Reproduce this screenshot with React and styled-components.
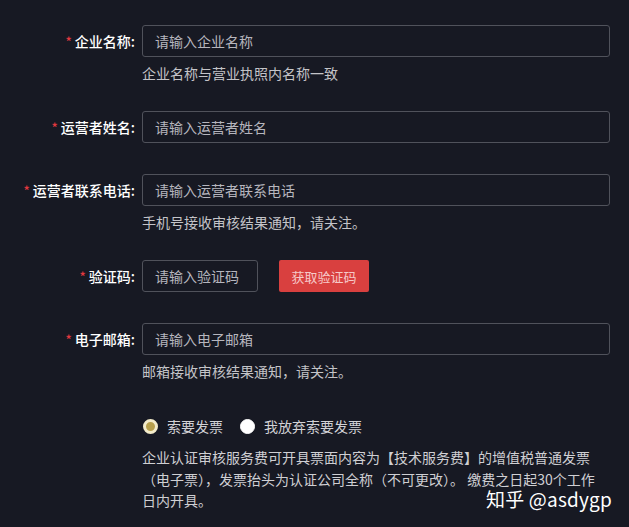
import React from 'react';
import styled, { createGlobalStyle } from 'styled-components';

const GlobalStyle = createGlobalStyle`
  html, body {
    margin: 0;
    padding: 0;
    background: #171923;
  }
  body {
    font-family: "Noto Sans CJK SC", "Noto Sans", sans-serif;
  }
`;

const Page = styled.main`
  position: relative;
  display: flex;
  flex-direction: column;
  align-items: flex-start;
  height: 100vh;
  box-sizing: border-box;
  padding-top: 25px;
  background: #171923;
  color: #fff;
  font-size: 14px;
  overflow: hidden;
`;

const FieldRow = styled.div`
  display: grid;
  grid-template-columns: 135px 468px;
  column-gap: 7px;
  margin-bottom: 31px;
  align-items: start;
`;

const Label = styled.label`
  display: flex;
  justify-content: flex-end;
  align-items: center;
  height: 32px;
  color: #ffffff;
  font-weight: 500;
  white-space: nowrap;
`;

const Star = styled.span`
  color: #e2383f;
  font-size: 13px;
  margin-right: 3px;
`;

const Control = styled.div`
  display: flex;
  flex-direction: column;
`;

const Inline = styled.div`
  display: flex;
  align-items: center;
  gap: 21px;
`;

const Input = styled.input`
  box-sizing: border-box;
  width: ${(p) => p.$width || '468px'};
  height: 32px;
  padding: 0 12px;
  background: transparent;
  border: 1px solid #50525b;
  border-radius: 3px;
  color: #fff;
  font: inherit;
  font-size: 14px;
  outline: none;

  &::placeholder {
    color: #b6b6be;
  }
`;

const CodeButton = styled.button`
  width: 90px;
  height: 32px;
  border: none;
  border-radius: 2px;
  background: #d9403f;
  color: #f6c9c9;
  font: inherit;
  font-size: 13px;
  cursor: pointer;
`;

const Hint = styled.div`
  margin-top: 9px;
  line-height: 14px;
  color: #c4c4c8;
  white-space: nowrap;
`;

const RadioGroup = styled.div`
  display: flex;
  align-items: center;
  height: 20px;
  margin-top: 7px;
  margin-left: 142px;
`;

const RadioOption = styled.label`
  display: flex;
  align-items: center;
  gap: 9px;
  margin-right: 16px;
  color: #d2d2d6;
  cursor: pointer;
`;

const RadioDot = styled.span`
  box-sizing: border-box;
  width: 15px;
  height: 15px;
  border-radius: 50%;
  background: ${(p) => (p.$checked ? '#b79f4b' : '#ffffff')};
  border: ${(p) => (p.$checked ? '3px solid #f3ebc9' : '1px solid #ffffff')};
  margin-left: 1px;
`;

const Note = styled.p`
  margin: 11px 0 0 142px;
  width: 464px;
  line-height: 21.5px;
  color: #cfcfd3;
`;

const Watermark = styled.div`
  position: absolute;
  right: 17px;
  bottom: 15px;
  font-size: 19px;
  color: #ffffff;
  letter-spacing: 0.2px;
`;

const fields = [
  { label: '企业名称', placeholder: '请输入企业名称', hint: '企业名称与营业执照内名称一致' },
  { label: '运营者姓名', placeholder: '请输入运营者姓名' },
  { label: '运营者联系电话', placeholder: '请输入运营者联系电话', hint: '手机号接收审核结果通知，请关注。' },
  { label: '验证码', placeholder: '请输入验证码', code: true },
  { label: '电子邮箱', placeholder: '请输入电子邮箱', hint: '邮箱接收审核结果通知，请关注。' },
];

const App = () => (
  <>
    <GlobalStyle />
    <Page>
      {fields.map((f) => (
        <FieldRow key={f.label}>
          <Label>
            <Star>*</Star>
            {f.label}:
          </Label>
          <Control>
            {f.code ? (
              <Inline>
                <Input $width="116px" placeholder={f.placeholder} />
                <CodeButton type="button">获取验证码</CodeButton>
              </Inline>
            ) : (
              <Input placeholder={f.placeholder} />
            )}
            {f.hint && <Hint>{f.hint}</Hint>}
          </Control>
        </FieldRow>
      ))}

      <RadioGroup>
        <RadioOption>
          <RadioDot $checked />
          索要发票
        </RadioOption>
        <RadioOption>
          <RadioDot />
          我放弃索要发票
        </RadioOption>
      </RadioGroup>

      <Note>
        企业认证审核服务费可开具票面内容为【技术服务费】的增值税普通发票（电子票），发票抬头为认证公司全称（不可更改）。 缴费之日起30个工作日内开具。
      </Note>

      <Watermark>知乎 @asdygp</Watermark>
    </Page>
  </>
);

export default App;
